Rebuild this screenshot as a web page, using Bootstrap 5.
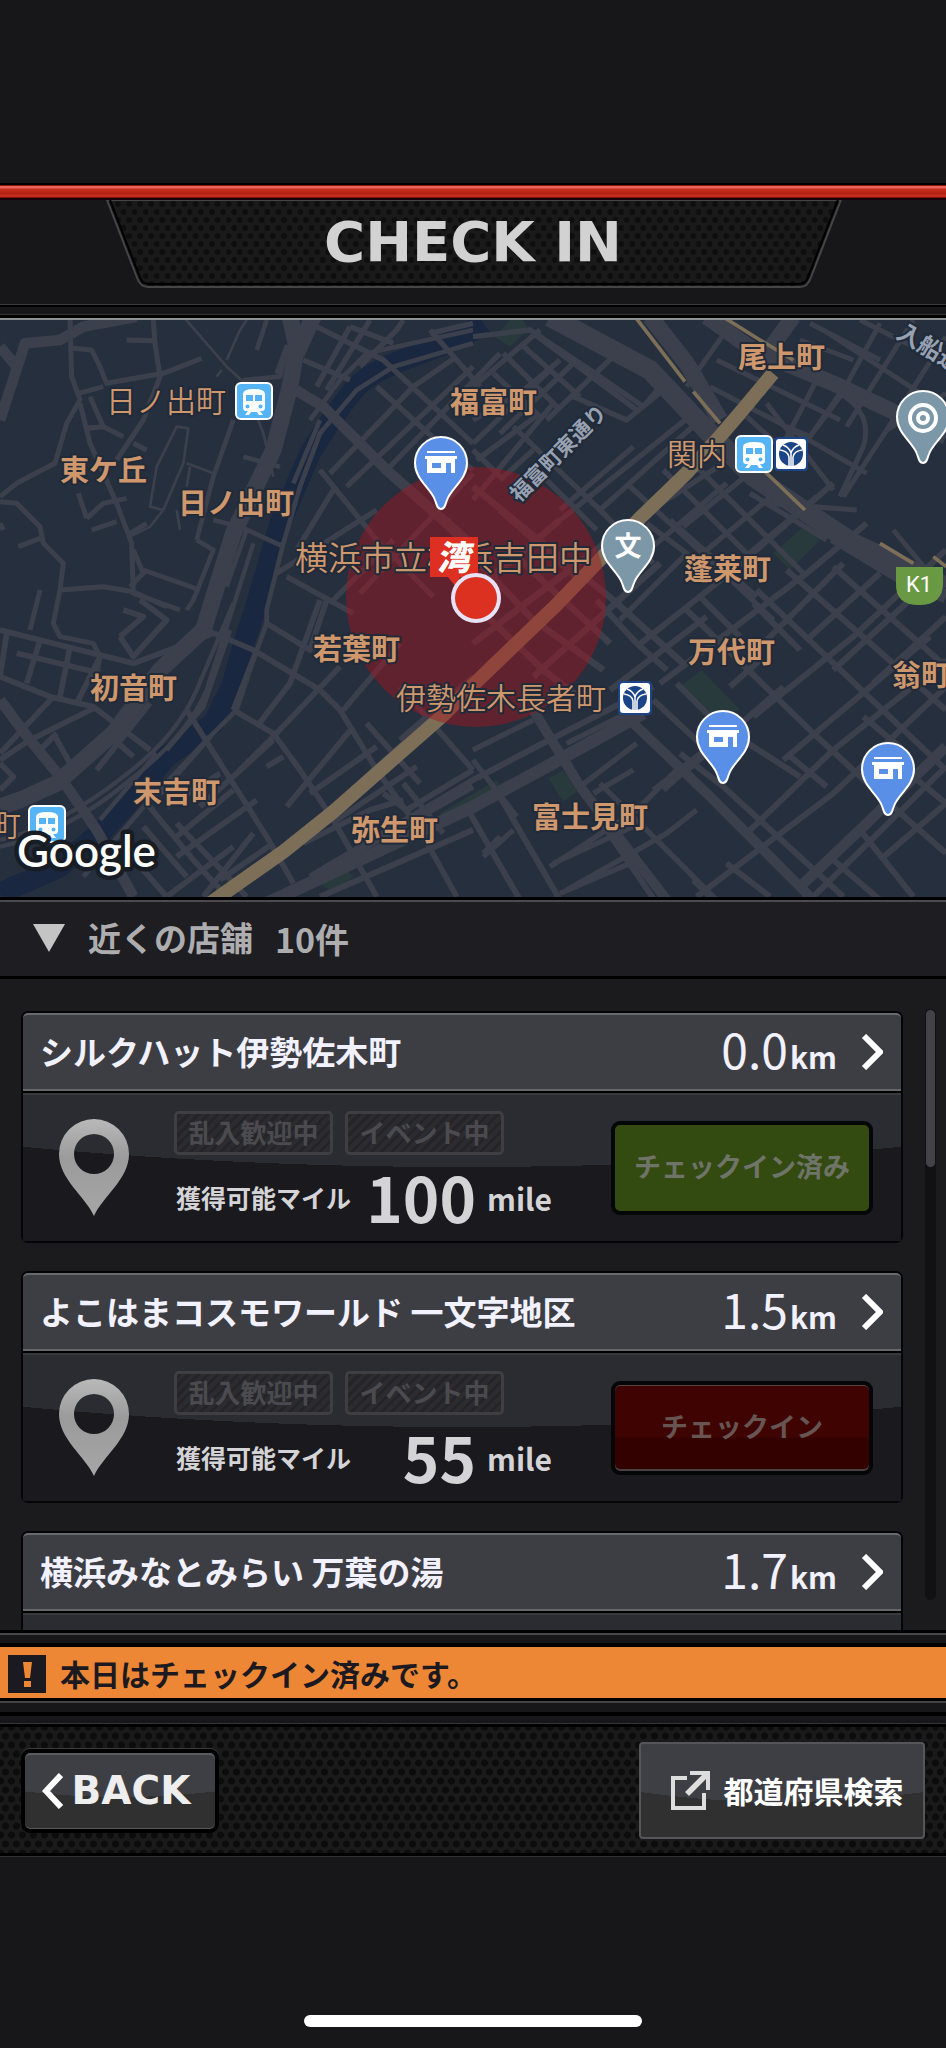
<!DOCTYPE html>
<html lang="ja">
<head>
<meta charset="utf-8">
<meta name="viewport" content="width=device-width, initial-scale=1">
<title>CHECK IN</title>
<link rel="stylesheet" href="https://cdn.jsdelivr.net/npm/bootstrap@5.3.0/dist/css/bootstrap.min.css">
<script src="https://cdn.jsdelivr.net/npm/bootstrap@5.3.0/dist/js/bootstrap.bundle.min.js"></script>
<style>
  body { background: #17171a; color: #d4d4d6; font-family: "Noto Sans CJK JP", sans-serif; }
  .app-top { flex: 0 0 183px; }
  .red-bar { flex: 0 0 17px; border-top: 2px solid #000; border-bottom: 2px solid #1a0000;
    background: linear-gradient(#8e1409 0 1px, #e8645a 1px 3px, #c42c1e 4px 6px, #b52415 7px 9px, #c42c1e 10px 12px, #7c0f06 12px); }
  .title-bar { flex: 0 0 104px; }
  .title-plate { width: 78%; height: 88px; }
  .title-plate svg { inset: 0; }
  .title-text { font: 700 56px/84px "DejaVu Sans", sans-serif; color: #d2d2d2; }
  .rule-top { flex: 0 0 16px; border-top: 1px solid #3b3b3d; border-bottom: 2px solid #8b9093;
    background: linear-gradient(#000 0 2px, #17171a 2px 9px, #333335 9px 10px, #000 10px); }
  .map-view { flex: 0 0 577px; }
  .label-b { font-size: 29px; font-weight: 700; }
  .label-l { font-size: 30px; font-weight: 350; }
  .label-xl { font-size: 33px; font-weight: 350; }
  .halo { fill: #cf976c; stroke: #202a39; stroke-width: 4px; paint-order: stroke; stroke-linejoin: round; }
  .street { fill: #98a1b1; stroke: #202a39; stroke-width: 4px; paint-order: stroke; font-weight: 700; }
  .near-bar { flex: 0 0 82px; background: #1e1d22; border: 0; border-top: 3px solid #000; border-bottom: 3px solid #000;
    box-shadow: inset 0 2px #4b4b4f; color: #adadaf; font-size: 33px; font-weight: 700; padding: 0 32px; gap: 22px; }
  .near-count { font-size: 34px; }
  .shop-area { flex: 1 1 0; min-height: 0; background: #1b1b1e; padding: 30px 10px 30px 21px; gap: 22px; margin-bottom: -30px; }
  .shop-list { gap: 28px; padding-top: 2px; }
  .shop { border: 2px solid #050507; border-radius: 7px; background: #1a191e; height: 232px; flex: none; }
  .shop-head { height: 78px; background: #3d3e43; border-top: 2px solid #68696d; border-bottom: 2px solid #66676b; border-radius: 5px 5px 0 0;
    color: #f1f1ff; text-decoration: none; padding: 0 18px 0 17px; }
  .shop-name { font-size: 33px; font-weight: 700; }
  .dist { font-size: 48px; font-weight: 400; line-height: 60px; }
  .dist small { font-size: 30px; font-weight: 700; margin-left: 2px; }
  .shop-body { height: 150px; border-top: 2px solid #000; box-shadow: inset 0 2px #37383c; padding: 0 28px 0 35px;
    background: radial-gradient(circle 4780px at 50% -4706px, #2b2c31 100%, #1a191e 100%); }
  .shop-pin { margin-top: 25px; }
  .shop-info { width: 376px; margin-left: 44px; padding-top: 18px; }
  .tag { width: 159px; height: 44px; border: 3px solid #3e3e43; border-radius: 5px; color: #4b4b4f; font-size: 26px; font-weight: 700; line-height: 36px;
    background: repeating-linear-gradient(135deg, #252529 0 3px, #2b2b30 3px 7px); }
  .miles { height: 80px; padding: 2px 0 0 2px; }
  .miles-label { font-size: 25px; font-weight: 700; padding-top: 4px; }
  .miles-num { font-size: 62px; font-weight: 700; line-height: 76px; }
  .miles-unit { font-size: 30px; font-weight: 700; width: 74px; padding: 4px 0 0 11px; }
  .check-btn { width: 262px; height: 94px; margin-top: 28px; border: 4px solid #050607; border-radius: 9px; font-size: 27px; font-weight: 700; padding: 0 0 4px; }
  .check-done, .check-done:disabled { background: #334a11; color: #6f7368; opacity: 1; }
  .check-open, .check-open:disabled { background: linear-gradient(#3f0402 60%, #330100 62%); color: #665553; opacity: 1; box-shadow: inset 0 -2px #494040, inset 0 1px #584444; }
  .track { flex: 0 0 11px; border-radius: 6px; background: #111113; margin-bottom: 30px; }
  .thumb { height: 24%; min-height: 159px; border-radius: 6px; background: #424247; border: 1px solid #101012; }
  .rule-mid { flex: 0 0 17px; background: linear-gradient(#000 0 3px, #47484a 3px 5px, #17171a 5px 13px, #000 13px); z-index: 1; }
  .notice { flex: 0 0 51px; background: #ee8735; color: #1c1a20; font-size: 30px; font-weight: 700; padding: 2px 8px 0; gap: 14px; }
  .notice-mark { width: 38px; height: 38px; background: #1b1a20; }
  .rule-low { flex: 0 0 29px; background: linear-gradient(#000 0 3px, #444446 3px 5px, #17171a 5px 14px, #000 14px 18px, #17171a 18px 25px, #333 25px 26px, #000 26px); }
  .dots { background-color: #1a1a1b;
    background-image: radial-gradient(circle at 50% 50%, #0c0c0c 0 3px, transparent 4px), radial-gradient(circle at 50% 50%, #0c0c0c 0 3px, transparent 4px);
    background-size: 11px 18px; background-position: 0 0, 6px 9px; }
  .foot { flex: 0 0 129px; border-bottom: 3px solid #000; box-shadow: 0 1px #303032; padding: 1px 21px 0; }
  .back-btn { width: 198px; height: 84px; border: 4px solid #000; border-radius: 9px; color: #eee; gap: 9px;
    background: radial-gradient(circle 800px at 50% -756px, #3e3f45 100%, #303030 100%); box-shadow: inset 0 2px #5a5b5f, inset 0 -1px #56575a, 0 -1px #3a3a3c; font: 700 39px/1 "DejaVu Sans", sans-serif; padding: 0 8px 0 0; }
  .pref-btn { width: 286px; height: 97px; border: 2px solid #55565a; border-radius: 4px; color: #fff; gap: 13px;
    background: radial-gradient(circle 1000px at 50% -942px, #3e3f45 100%, #303030 100%); font-size: 30px; font-weight: 700; padding: 0 0 0 8px; }
  .app-bottom { flex: 0 0 192px; padding-bottom: 21px; }
  .home { width: 338px; height: 12px; border-radius: 6px; background: #fff; }
</style>
</head>
<body>
<div class="d-flex flex-column vh-100 overflow-hidden">
  <div class="app-top"></div>
  <div class="red-bar"></div>
  <header class="title-bar d-flex justify-content-center align-items-start">
    <div class="title-plate position-relative d-flex justify-content-center">
      <svg class="position-absolute w-100 h-100" viewBox="0 0 734 88" preserveAspectRatio="none" aria-hidden="true">
        <defs><pattern id="mesh" width="11" height="16" patternUnits="userSpaceOnUse"><rect width="11" height="16" fill="#1a1a1b"/><circle cx="3" cy="4" r="3" fill="#0e0e0e"/><circle cx="8.500" cy="12" r="3" fill="#0e0e0e"/></pattern></defs>
        <path d="M3 0L33 78Q36 87 44 87H692Q700 87 703 78L733 0Z" fill="url(#mesh)" stroke="#454547" stroke-width="2"/>
        <path d="M6 0L36 78Q38 84 46 84H690Q698 84 700 78L730 0" fill="none" stroke="#000" stroke-width="2"/>
      </svg>
      <h1 class="title-text position-relative m-0">CHECK IN</h1>
    </div>
  </header>
  <div class="rule-top"></div>

  <svg class="map-view w-100 d-block" viewBox="0 320 946 577" preserveAspectRatio="xMidYMid slice" role="img" aria-label="現在地周辺の地図">
    <defs>
      <g id="train"><rect x="1" y="1" width="36" height="36" rx="5" fill="#55b4f5" stroke="#fff" stroke-width="2"/><path d="M8 12Q8 7 19 7T30 12V26Q30 28 28 29L25 29 28 33H24L22 30H16L14 33H10L13 29 10 29Q8 28 8 26Z" fill="#fff"/><path d="M11 13H18V19H11ZM20 13H27V19H20Z" fill="#55b4f5"/><circle cx="12.500" cy="24.500" r="2" fill="#55b4f5"/><circle cx="25.500" cy="24.500" r="2" fill="#55b4f5"/></g>
      <g id="metro"><rect width="34" height="34" rx="4" fill="#1c4587"/><rect x="2" y="2" width="30" height="30" rx="3" fill="#fff"/><circle cx="17" cy="17" r="12" fill="#1c4587"/><path d="M15 30V20Q14 14 6 13M19 30V20Q20 14 28 13M17 16Q15 10 9 8M17 16Q19 10 25 8M17 30V16" fill="none" stroke="#fff" stroke-width="1.500"/></g>
      <path id="pin" d="M0 0C-4 0-4-4-6-9C-10-21-26-29-26-46A26 26 0 0 1 26-46C26-29 10-21 6-9C4-4 4 0 0 0Z" stroke="#fff" stroke-width="2"/>
      <g id="store"><use href="#pin" fill="#5a8fe8"/><path d="M-14-58H14V-56H-14ZM-16-53H16V-50H14V-36H10V-46H5V-36H-14V-50H-16ZM-9-46V-41H0V-46Z" fill="#fff" fill-rule="evenodd"/></g>
    </defs>
    <rect y="319" width="946" height="578" fill="#262f3e"/>
    <g transform="translate(0 310) scale(.33333)" fill="none" stroke="#3c404c" stroke-linejoin="round">
      <path d="M1450 40C1330 130 1160 140 1070 230C1000 310 970 370 930 430L840 640 765 900 735 990 695 1130 640 1240 500 1340 400 1460 310 1560 180 1670 0 1750" stroke="#192740" stroke-width="64"/>
      <g fill="#293a3d" stroke="none">
        <path d="M1485 80L1530 30H1570L1585 60 1530 110ZM2320 730L2410 650 2460 690 2370 780ZM2045 1125L2105 1080 2220 1200 2130 1220ZM1645 1405L1690 1380 1730 1445 1690 1475ZM960 1720L1040 1680 1060 1700 1000 1750ZM1320 1510L1490 1410 1500 1430 1330 1525Z"/>
      </g>
      <!-- avenues -->
      <path d="M870 20L890 110 870 230 820 420 700 670 610 960 480 1080 340 1270 170 1420 60 1470 0 1490M940 20L890 130" stroke-width="50"/>
      <path d="M0 330L75 100 180 90 250 50 410 20M870 230L970 290 1160 480 1419 710M0 110L50 170M0 1170L90 1290 180 1400 290 1560 400 1760" stroke-width="32"/>
      <path d="M0 1590Q180 1550 370 1400Q530 1280 590 1140L700 880M0 1610Q200 1570 390 1410Q560 1280 620 1140L760 700M300 1530L470 1330M680 830L740 660" stroke-width="13"/>
      <!-- western lanes -->
      <path d="M210 20L215 200 240 270 200 340 165 460 50 520 0 560M220 115L275 120 300 170 320 220 490 190 605 145M460 30L465 100 480 200 430 330 350 450M380 90L460 92M235 250L310 230M240 280L270 400 350 580 395 700 400 850 540 900M270 260L310 350 260 355M310 350L370 380M400 400L440 420M0 575L50 580 120 650 130 700 190 760 180 840 310 830 400 845 500 890M55 710L120 685M180 840L160 940 180 980 280 1000 300 1040 290 1090M120 840L90 960M235 550L260 625M260 625L310 580 380 565M275 660L350 635M390 670L440 640M400 720L430 790 390 830M430 780L600 840M0 640L10 660" stroke-width="15"/>
      <path d="M470 470L530 350 565 355 550 460 490 600 450 590ZM550 20L680 170 730 215 790 370 820 500M680 150L720 60 740 30M650 200L665 180M490 600L450 650 390 680M560 460L640 490M570 470L560 530M530 600L540 660" stroke-width="8"/>
      <path d="M700 330L640 500 590 690M800 30L770 120M730 210L840 200 860 110 830 190M590 690L640 720 580 870 560 900M640 630L720 650 850 710M730 440L840 470" stroke-width="14"/>
      <path d="M1419 100L1180 170 1070 240 960 370 900 530 850 700 800 900 800 940 760 1050 710 1200 630 1280 440 1480 250 1700M1419 60L1100 130 1020 210 930 330M960 330L880 520M690 960L610 1190 500 1320" stroke-width="14"/>
      <!-- northern blocks -->
      <path d="M930 40L1150 150 1419 400M910 150L1050 210M950 230L1050 50M980 240L1110 30M1080 170L1190 60 1210 30M1050 50L1180 100M1130 230L1330 410 1419 480M990 490L1240 230 1370 140M1040 530L1419 170M1160 480L1500 130M1290 60L1370 150 1440 230M1290 70L1419 40M960 480L1130 690 1300 860M1000 540L890 720M830 790L1130 600M860 800L1060 910M1080 850L1419 490M990 880L1180 690" stroke-width="16"/>
      <!-- south-west blocks -->
      <path d="M0 960L200 1010 400 1060 640 970M0 1100L150 1160 280 1190 450 1320M20 970L0 1100M120 990L80 1120M210 1010L180 1160M300 1040L230 1180M50 1030L300 1090M290 1190L90 1290 0 1350M360 980L430 920 370 900M360 980L400 1040 500 930 420 870M450 1180L290 1380M160 1160L0 1330M160 1270L210 1360M120 1320L170 1270M320 1270L400 1340M0 1360L40 1400 0 1440" stroke-width="17"/>
      <!-- central blocks -->
      <path d="M620 960L760 1020 960 1140 1020 1200 1130 1380 1260 1560 1370 1760M800 940L930 1020 980 870M700 1200L820 1270 900 1380 1000 1530 1130 1760M560 1200L680 1390 800 1580 880 1720M440 1480L580 1650 680 1760M770 1020L700 1200M960 870L870 1120 770 1250M1020 1070L820 1280 700 1400M1200 1000L1030 1200M1060 1250L860 1490M1130 1310L930 1450M1210 1300L900 1580M1250 1370L1010 1530M1419 1100L1200 1290M1200 1130L1419 1380M1100 1240L1260 1420M630 1280L480 1450M820 1290L600 1490M770 1470L530 1640M760 1570L610 1760M700 1440L530 1580M660 1390L500 1490M800 1370L850 1340M530 1540L740 1760M360 1600L500 1760M430 1550L560 1700M700 1610L500 1760M820 1600L660 1710M910 1600L1110 1500 1210 1470M1210 1420L1330 1570M1150 1450L1220 1500 1419 1380" stroke-width="17"/>
      <!-- southern boulevard -->
      <path d="M800 1780L1419 1490 1640 1370 1930 1210" stroke-width="38"/>
      <path d="M930 1700L1190 1560 1419 1430M960 1760L1419 1560M930 1700L1419 1410 1590 1320 1960 1130M1410 1510L1560 1770M1500 1460L1680 1770M1600 1210L1700 1350 1820 1560 1970 1780" stroke-width="18"/>
      <path d="M1600 1200L1740 1430M1890 1230L2120 1450 2430 1760M1740 1430L2000 1770" stroke-width="30"/>
      <path d="M1450 1640L1540 1560M1450 1630L1500 1580M1660 1660L1900 1550M1650 1670L1880 1520M1740 1430L1910 1300M1800 1420L2030 1650 2150 1770M1780 1450L1900 1380M1960 1440L2140 1300M2040 1370L1850 1560M1680 1750L1890 1660M1700 1740L2000 1570 2090 1500M1419 1320L1600 1230M1700 1300L1900 1200M1419 1350L1550 1520" stroke-width="16"/>
      <!-- Kannai, north-east -->
      <path d="M1650 20L1950 180 2120 360 2260 500 2560 700 2838 830" stroke-width="60"/>
      <path d="M1950 20L2060 160 2160 330" stroke-width="50"/>
      <path d="M2120 20L2260 120 2500 220 2838 380M2380 20L2300 130" stroke-width="48"/>
      <path d="M2180 60L2060 230M2130 230L2340 340 2600 490M2150 150L2520 330M2430 40L2640 150M2640 40L2520 260 2400 420M2740 30L2540 350M2838 80L2660 360 2530 560M2470 60L2838 300M2400 90L2560 150M2580 30L2838 160M2360 350L2430 380 2520 250Q2620 310 2590 410L2520 560M2450 210L2340 420M2660 360L2838 250M2300 280L2500 540M2240 320L2340 410M2300 580L2570 600M2680 660L2838 850" stroke-width="15"/>
      <path d="M1419 80L1590 60 1770 180 1930 290 1980 230M1419 230L1620 60M1480 190L1620 320M1510 130L1680 300M1560 100L1740 260M1600 70L1910 300M1419 330L1560 250 1680 150M1419 400L1650 180M1500 370L1730 150M1640 330L1860 120M1430 450L1620 310M1500 510L1600 420M1419 420L1500 500M1720 260L1880 330 1990 240" stroke-width="16"/>
      <path d="M1419 570L1660 280M1540 350L1800 600 1960 760M1640 510L1790 660M1419 840L2080 310M1680 600L1900 410M1800 600L2100 330M1880 520L2140 760 2320 930M1830 680L2200 440M1900 760L2180 520M1990 480L2240 730M2070 450L2410 790M2050 650L2260 480M2120 720L2350 530M2200 770L2450 560M2250 550L2480 690M1940 640L2060 730 1860 930M2010 630L2270 860" stroke-width="16"/>
      <path d="M1419 530L1840 870 2060 1070M1419 740L1600 930 1810 1080M1419 880L1630 1080 1760 1180M1419 850L1680 630M1419 1000L1840 680M1600 1100L1980 760M1550 740L1830 1000M1500 600L1750 820" stroke-width="20"/>
      <!-- Bandai / Okina, east -->
      <path d="M1790 870L1910 1000 2000 1080M1910 1010L2200 780 2500 520M1980 1120L2420 790 2600 640M1830 1140L2120 920M2060 900L2440 1270 2690 1500 2838 1630M2100 860L2220 980M2260 880L2400 1020M2270 840L2690 1240 2838 1380M2360 780L2600 990 2838 1200M2500 770L2838 1070M2260 1220L2560 980 2838 720M2350 1350L2790 980M2500 1320L2838 1050M2590 1220L2710 1320M2360 1330L2480 1430M2190 1130L2280 1050M2030 1120L2150 1240 2400 1400M1960 1170L2100 1300M2040 1330L2170 1430 2530 1760M1990 1440L2100 1340M2050 1390L2350 1130M2240 1570L2500 1320M2090 1760L2500 1450 2838 1130M2420 1780L2838 1370M2580 1560L2740 1760M2640 1650L2838 1480M2500 1650L2640 1770M2740 1400L2838 1480M2180 1660L2310 1760M2080 1710L2140 1770M2530 760L2300 990M2640 790L2420 990M2740 860L2500 1080M2838 920L2620 1120" stroke-width="18"/>
      <path d="M2390 1740L2600 1540 2838 1310" stroke-width="32"/>
      <path d="M2500 680L2700 800 2838 860" stroke-width="40"/>
      <!-- toll and trunk roads -->
      <path d="M630 1780L850 1625 1000 1505 1330 1215 1419 1125 1669 885 1919 625 2059 490 2159 380 2219 310 2319 190" stroke="#7c6e57" stroke-width="42"/>
      <path d="M2160 15L2280 90 2380 150M1905 20L2055 215M2080 245L2160 340M2290 480L2415 600M2640 700L2740 760M2800 740L2838 770" stroke="#7c6e57" stroke-width="11"/>
    </g>
    <circle cx="476" cy="597" r="130" fill="#a5131c" fill-opacity=".46"/>
    <g class="halo label-b">
      <text x="450" y="413">福富町</text><text x="60" y="481">東ケ丘</text><text x="178" y="514">日ノ出町</text>
      <text x="738" y="368">尾上町</text><text x="684" y="580">蓬莱町</text><text x="688" y="663">万代町</text><text x="892" y="686">翁町</text>
      <text x="313" y="660">若葉町</text><text x="90" y="699">初音町</text><text x="133" y="803">末吉町</text><text x="351" y="841">弥生町</text><text x="532" y="828">富士見町</text>
    </g>
    <g class="halo label-l">
      <text x="106" y="412">日ノ出町</text><text x="667" y="465">関内</text><text x="396" y="709">伊勢佐木長者町</text><text x="-9" y="836">町</text>
    </g>
    <text class="halo label-xl" x="295" y="570">横浜市立横浜吉田中</text>
    <g class="street"><text transform="translate(519 503) rotate(-45)" font-size="21">福富町東通り</text><text transform="translate(895 337) rotate(31)" font-size="24">入船通り</text></g>
    <use href="#train" x="235" y="382"/><use href="#train" x="735" y="435"/><use href="#metro" x="774" y="437"/><use href="#metro" x="618" y="681"/><use href="#train" x="28" y="805"/>
    <use href="#store" x="441" y="509"/><use href="#store" x="723" y="783"/><use href="#store" x="888" y="815"/>
    <use href="#pin" x="628" y="592" fill="#7c98a8"/><text x="628" y="556" text-anchor="middle" font-size="27" font-weight="700" fill="#fff">文</text>
    <use href="#pin" x="923" y="463" fill="#7c98a8"/><g fill="none" stroke="#fff" stroke-width="4"><circle cx="923" cy="418" r="13"/><circle cx="923" cy="418" r="5"/></g>
    <path d="M896 567H943V583Q943 605 919 605T896 583Z" fill="#699a43"/><text x="919" y="592" text-anchor="middle" font-family="Roboto, sans-serif" font-size="22" fill="#fff">K1</text>
    <path d="M430 537H478V577H460L456 587 448 577H430Z" fill="#de3022"/><text transform="translate(437 570) skewX(-10)" font-size="34" font-weight="900" fill="#fff">湾</text>
    <circle cx="476" cy="598" r="23" fill="#dc3021" stroke="#e8e2f5" stroke-width="4"/>
    <text x="17" y="867" font-family="Lato, sans-serif" font-size="44" font-weight="600" fill="#fff" stroke="#181d25" stroke-width="9" paint-order="stroke" stroke-linejoin="round">Google</text>
  </svg>

  <button class="near-bar d-flex align-items-center text-start w-100" type="button">
    <svg width="34" height="28" viewBox="0 0 34 28" aria-hidden="true"><path d="M1 0H33L17 28Z" fill="#c4c4c4"/></svg>
    <span>近くの店舗</span><span class="near-count">10件</span>
  </button>

  <main class="shop-area d-flex">
    <div class="shop-list d-flex flex-column flex-fill overflow-hidden">
      <article class="shop">
        <a href="#" class="shop-head d-flex align-items-center">
          <span class="shop-name flex-fill">シルクハット伊勢佐木町</span><span class="dist">0.0<small>km</small></span>
          <svg class="ms-4" width="22" height="36" viewBox="0 0 22 36" aria-hidden="true"><path d="M3 2L19 18 3 34" fill="none" stroke="#fff" stroke-width="6"/></svg>
        </a>
        <div class="shop-body d-flex align-items-start">
          <svg class="shop-pin flex-shrink-0" width="72" height="98" viewBox="0 0 72 98" aria-hidden="true"><defs><linearGradient id="silver" x2="0" y2="1"><stop stop-color="#b9b9b9"/><stop offset=".4" stop-color="#9b9b9b"/><stop offset="1" stop-color="#a6a6a6"/></linearGradient></defs><path d="M36 98C27 78 1 61 1 36A35 35 0 0 1 71 36C71 61 45 78 36 98ZM36 16A20 20 0 0 0 36 56A20 20 0 0 0 36 16Z" fill="url(#silver)"/></svg>
          <div class="shop-info">
            <div class="d-flex gap-2"><span class="tag text-center">乱入歓迎中</span><span class="tag text-center ms-1">イベント中</span></div>
            <div class="miles d-flex align-items-center"><span class="miles-label">獲得可能マイル</span><span class="miles-num flex-fill text-end">100</span><span class="miles-unit">mile</span></div>
          </div>
          <button type="button" class="check-btn check-done ms-auto" disabled>チェックイン済み</button>
        </div>
      </article>
      <article class="shop">
        <a href="#" class="shop-head d-flex align-items-center">
          <span class="shop-name flex-fill">よこはまコスモワールド 一文字地区</span><span class="dist">1.5<small>km</small></span>
          <svg class="ms-4" width="22" height="36" viewBox="0 0 22 36" aria-hidden="true"><path d="M3 2L19 18 3 34" fill="none" stroke="#fff" stroke-width="6"/></svg>
        </a>
        <div class="shop-body d-flex align-items-start">
          <svg class="shop-pin flex-shrink-0" width="72" height="98" viewBox="0 0 72 98" aria-hidden="true"><path d="M36 98C27 78 1 61 1 36A35 35 0 0 1 71 36C71 61 45 78 36 98ZM36 16A20 20 0 0 0 36 56A20 20 0 0 0 36 16Z" fill="url(#silver)"/></svg>
          <div class="shop-info">
            <div class="d-flex gap-2"><span class="tag text-center">乱入歓迎中</span><span class="tag text-center ms-1">イベント中</span></div>
            <div class="miles d-flex align-items-center"><span class="miles-label">獲得可能マイル</span><span class="miles-num flex-fill text-end">55</span><span class="miles-unit">mile</span></div>
          </div>
          <button type="button" class="check-btn check-open ms-auto" disabled>チェックイン</button>
        </div>
      </article>
      <article class="shop">
        <a href="#" class="shop-head d-flex align-items-center">
          <span class="shop-name flex-fill">横浜みなとみらい 万葉の湯</span><span class="dist">1.7<small>km</small></span>
          <svg class="ms-4" width="22" height="36" viewBox="0 0 22 36" aria-hidden="true"><path d="M3 2L19 18 3 34" fill="none" stroke="#fff" stroke-width="6"/></svg>
        </a>
        <div class="shop-body"></div>
      </article>
    </div>
    <div class="track"><div class="thumb"></div></div>
  </main>

  <div class="rule-mid position-relative"></div>
  <div class="notice d-flex align-items-center position-relative" role="status">
    <svg class="notice-mark" viewBox="0 0 38 38" aria-hidden="true"><path d="M15 7H24L22 23H17ZM16 26H23V32H16Z" fill="#ee8735"/></svg>
    <span>本日はチェックイン済みです。</span>
  </div>
  <div class="rule-low"></div>
  <footer class="foot dots d-flex align-items-center justify-content-between">
    <button type="button" class="back-btn d-flex align-items-center justify-content-center">
      <svg width="21" height="36" viewBox="0 0 21 36" aria-hidden="true"><path d="M19 2L4 18 19 34" fill="none" stroke="#fff" stroke-width="6"/></svg><span>BACK</span>
    </button>
    <button type="button" class="pref-btn d-flex align-items-center justify-content-center">
      <svg width="42" height="42" viewBox="0 0 42 42" aria-hidden="true"><path d="M18 8H4V38H35V23" fill="none" stroke="#ddd" stroke-width="4"/><path d="M21 1H41V20H37V9L20 26 16 22 33 5H21Z" fill="#ddd"/></svg><span>都道府県検索</span>
    </button>
  </footer>
  <div class="app-bottom d-flex align-items-end justify-content-center"><div class="home"></div></div>
</div>
</body>
</html>
